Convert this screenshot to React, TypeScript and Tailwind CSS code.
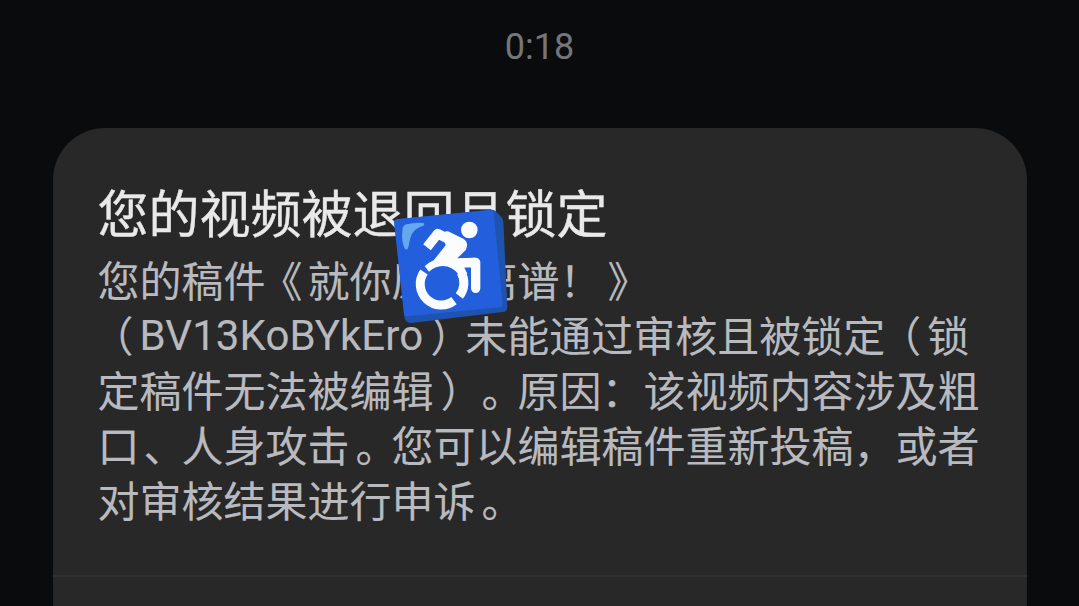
const BODY_LINES: { before: string; latin?: string; after?: string }[] = [
  { before: "您的稿件《就你原神离谱！》" },
  { before: "（", latin: "BV13KoBYkEro", after: "）未能通过审核且被锁定（锁" },
  { before: "定稿件无法被编辑）。原因：该视频内容涉及粗" },
  { before: "口、人身攻击。您可以编辑稿件重新投稿，或者" },
  { before: "对审核结果进行申诉。" },
];

/* Half-width punctuation forms, padded out to a full 42px cell. */
const PUNCTUATION: Record<string, string> = {
  "（": "pl-[15px] pr-[6px] [font-feature-settings:'halt']",
  "）": "pl-[7px] pr-[14px] [font-feature-settings:'halt']",
  "《": "pl-[16px] pr-[5px] [font-feature-settings:'halt']",
  "》": "pl-[6px] pr-[15px] [font-feature-settings:'halt']",
  "。": "pl-[6px] pr-[15px] [font-feature-settings:'halt']",
  "、": "pl-[4px] pr-[17px] [font-feature-settings:'halt']",
};

function Glyphs({ text }: { text: string }) {
  return (
    <span>
      {text.split(/([（）《》。、])/).filter(Boolean).map((part, i) =>
        PUNCTUATION[part] ? (
          <span key={i} className={PUNCTUATION[part]}>{part}</span>
        ) : (
          part
        ),
      )}
    </span>
  );
}

function WheelchairSticker() {
  return (
    <svg
      className="absolute left-[380px] top-[195px] h-[140px] w-[140px]"
      viewBox="0 0 420 420"
      aria-hidden="true"
    >
      <path
        d="M50 73 L333 44 Q343 43 349 51 L364 66 Q369 71 370 79 L382 335 Q383 344 374 350 L94 384 Q86 385 80 379 L74 371 L43 86 Q42 74 50 73Z"
        fill="#1f53b0"
      />
      <path
        d="M50 73 L328 45 Q339 44 341 55 L368 326 Q369 336 359 337 L82 364 Q73 365 72 356 L43 86 Q42 74 50 73Z"
        fill="#235fdc"
      />
      <path
        d="M68 98 Q70 90 79 88 Q106 82 130 84 Q136 87 130 92 Q105 100 96 116 Q89 130 86 154 Q83 166 76 163 Q67 150 66 124Z"
        fill="#64a9ed"
      />
      <g fill="none" stroke="#fafcff">
        <path d="M141 157 L173 116 L235 147" strokeWidth="29" strokeLinejoin="round" />
        <path d="M246 204 L287 202 L287 280" strokeWidth="28" strokeLinejoin="round" strokeLinecap="round" />
        <path d="M132 231 A63 63 0 0 0 222 317" strokeWidth="27" />
        <path d="M238 303 A63 63 0 0 0 243 232" strokeWidth="27" />
      </g>
      <path
        d="M186 113 L192 113 Q195 107 204 109 L250 131 Q263 139 261 153 L258 164 L232 190 L285 188 L284 208 L252 216 L262 236 L239 242 Q219 213 187 213 Q165 214 147 230 L134 214 Q149 201 161 196 L197 151Z"
        fill="#fafcff"
      />
      <circle cx="268" cy="105" r="25" fill="#fafcff" />
    </svg>
  );
}

export default function App() {
  return (
    <main
      lang="zh-CN"
      className="relative flex h-[606px] w-[1079px] flex-col items-center overflow-hidden bg-[#090b0d] font-['Roboto','Noto_Sans_CJK_SC',sans-serif]"
    >
      <time className="flex h-32 w-full shrink-0 justify-center pt-[23px] text-[36px] leading-[48px] text-[#74777a]">
        0:18
      </time>
      <article className="flex h-[520px] w-[974px] shrink-0 flex-col rounded-t-[52px] bg-[#282828]">
        <div className="flex h-[447px] flex-col px-[45px] pt-[52px]">
          <h1 className="h-[71px] whitespace-nowrap font-['Noto_Sans_CJK_SC',sans-serif] text-[51px] leading-[62px] text-[#e9e9e9] [-webkit-text-stroke:0.4px]">
            您的视频被退回且锁定
          </h1>
          <div className="flex flex-col font-['Noto_Sans_CJK_SC',sans-serif] text-[42px] leading-[55px] text-[#b8babf] [-webkit-text-stroke:0.1px]">
            {BODY_LINES.map((line) => (
              <p key={line.before} className="flex h-[55px] whitespace-nowrap">
                <Glyphs text={line.before} />
                {line.latin && <span className="pt-0.5 font-['Roboto',sans-serif] tracking-[0.1px]">{line.latin}</span>}
                {line.after && <Glyphs text={line.after} />}
              </p>
            ))}
          </div>
        </div>
        <div className="h-[2px] bg-[#313131]" />
      </article>
      <WheelchairSticker />
    </main>
  );
}
